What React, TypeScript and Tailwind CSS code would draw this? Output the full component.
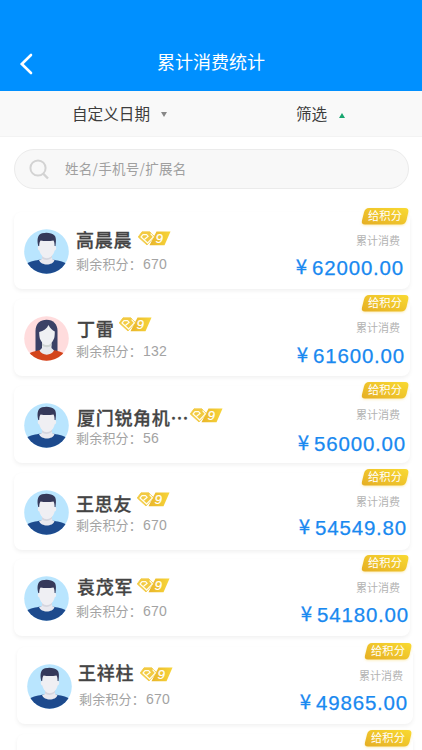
interface Member {
  name: string;
  points: number;
  total: string;
  female?: boolean;
  cardClass: string;
  nameClass: string;
  levelClass: string;
  totalClass: string;
}

const members: Member[] = [
  { name: "高晨晨", points: 670, total: "62000.00", cardClass: "ml-3.5 mt-[23px]", nameClass: "pt-[14px]", levelClass: "mt-px ml-[5px]", totalClass: "pt-[7px] pr-[6px]" },
  { name: "丁雷", points: 132, total: "61600.00", female: true, cardClass: "ml-3.5 mt-2.5", nameClass: "pt-4 pl-px", levelClass: "-mt-0.5 ml-[4px]", totalClass: "pt-2 pr-[5px]" },
  { name: "厦门锐角机⋯", points: 56, total: "56000.00", cardClass: "ml-3.5 mt-2.5", nameClass: "pt-[18px] pl-px", levelClass: "ml-0", totalClass: "pt-[9px] pr-[4px]" },
  { name: "王思友", points: 670, total: "54549.80", cardClass: "ml-3.5 mt-2.5", nameClass: "pt-[17px]", levelClass: "-mt-0.5 ml-[4px]", totalClass: "pt-1.5 pr-[3px]" },
  { name: "袁茂军", points: 670, total: "54180.00", cardClass: "ml-3.5 mt-[9px]", nameClass: "pt-[14px] pl-px", levelClass: "mt-px ml-[3px]", totalClass: "pt-[7px] pr-px" },
  { name: "王祥柱", points: 670, total: "49865.00", cardClass: "ml-[17px] mt-[11px]", nameClass: "pt-[12px] -ml-px", levelClass: "mt-1 ml-[5px]", totalClass: "pt-[7px] pr-[5px]" },
];

function MaleAvatar() {
  return (
    <svg viewBox="0 0 45 45" className="size-[45px]">
      <defs>
        <clipPath id="male-clip"><circle cx="22.5" cy="22.5" r="22.3" /></clipPath>
      </defs>
      <g clipPath="url(#male-clip)">
        <rect width="45" height="45" fill="#b9e5fe" />
        <path d="M2 35C6 32 12 31.5 17 30.5H28C33 31.5 39 32 43 35V45H2Z" fill="#1d4a8d" />
        <path d="M18 24H28V30L30.5 31C29 37 17 37 15 31L18 30Z" fill="#e9e9ef" />
        <path d="M18 27C21 30 25 30 28 26V28.5C25 32 20 31 18 29.5Z" fill="#d5d6df" />
        <path d="M15.2 10H30.8V17C33 17 32.4 21.5 30.6 21.5C30 25.5 26.5 29 23 29S16 25.5 15.4 21.5C13.6 21.5 13 17 15.2 17Z" fill="#efeff3" />
        <path d="M14.3 17C13 12 13 5.5 18 4.3C22 3 28 3.5 30.5 6.5C32.5 8.5 32 13 31.5 17H30.6C30.6 14.5 30.3 12.5 29.5 11.4C25 12.2 20 12 16.6 11.4C15.6 12.5 15.3 14.5 15.2 17Z" fill="#35395a" />
      </g>
    </svg>
  );
}

function FemaleAvatar() {
  return (
    <svg viewBox="0 0 45 45" className="size-[45px]">
      <defs>
        <clipPath id="female-clip"><circle cx="22.5" cy="22.5" r="22.3" /></clipPath>
      </defs>
      <g clipPath="url(#female-clip)">
        <rect width="45" height="45" fill="#ffdcdd" />
        <path d="M11.5 36V15C11.5 7.5 16.5 3.8 22.5 3.8C29.5 3.8 33.5 8.5 33.5 15V36Z" fill="#3b4166" />
        <path d="M3 39C7 35.5 13 34.5 17 34H28C33 34.5 38 35.5 42 39V45H3Z" fill="#d3441b" />
        <path d="M18 25H27.5V32L30 34.5C27.5 40 18 40 15.5 34.5L18 32Z" fill="#e8e9ed" />
        <path d="M18 27C21 30 25 29.5 27.5 27V29.5C25 32 20.5 31.5 18 29.5Z" fill="#cfd4d3" />
        <path d="M24.5 9C26 12 28.5 14.5 30.8 15.5C30.8 19 30.5 22 29.8 23C28 27 25.5 29 23 29S18 27 16 23C15.4 21 15.2 18 15.2 16C19.5 15 23 12.5 24.5 9Z" fill="#eff0f3" />
      </g>
    </svg>
  );
}

function LevelIcon() {
  return (
    <svg viewBox="0 0 34 16" className="w-[34px] h-4 shrink-0">
      <defs>
        <linearGradient id="level-gold">
          <stop offset="0" stopColor="#e9b52a" />
          <stop offset="1" stopColor="#f7d53a" />
        </linearGradient>
      </defs>
      <path d="M19.5 0.5H33.5L27.5 14.2H12.5Z" fill="url(#level-gold)" />
      <path d="M5 0.8H12.8L17.6 5.6L10 14L1.2 6Z" fill="#f2ca42" stroke="#f2ca42" strokeWidth="0.8" strokeLinejoin="round" />
      <path d="M7.6 8.3L11.2 5.3L9.6 3.6H6L4 6L10.6 12L16.4 5.8L13.6 2.6" fill="none" stroke="#fffdf0" strokeWidth="1.2" strokeLinejoin="round" />
      <text x="18.6" y="12.2" fill="white" fontSize="13.5" fontStyle="italic" fontFamily="Liberation Sans, sans-serif" stroke="white" strokeWidth="0.2">9</text>
    </svg>
  );
}

function PointsButton() {
  return (
    <button className="absolute -top-1 right-[1px] w-[48px] h-[17px] text-white text-[11.3px] leading-[15px]">
      <svg viewBox="0 0 48 17" className="absolute inset-0 size-full drop-shadow-[0_1px_1px_#f7dc7580]">
        <defs>
          <linearGradient id="button-gold" x1="0" y1="1" x2="1" y2="0">
            <stop offset="0" stopColor="#e5ae24" />
            <stop offset="1" stopColor="#f9da32" />
          </linearGradient>
        </defs>
        <path d="M8 0H44Q48 0 47.3 4L45.5 12Q44.3 16.5 40 16.5H4Q0 16.5 1 12.5L3 4.5Q4 0 8 0Z" fill="url(#button-gold)" />
      </svg>
      <span className="relative -top-px">给积分</span>
    </button>
  );
}

function MemberCard({ member }: { member: Member }) {
  return (
    <div className={`relative flex w-[396px] h-[77px] shrink-0 rounded-lg bg-white shadow-[0_2px_4px_rgba(0,0,0,0.06)] ${member.cardClass}`}>
      <div className="ml-[9.5px] mt-[16.5px] shrink-0">
        {member.female ? <FemaleAvatar /> : <MaleAvatar />}
      </div>
      <div className="ml-[7.5px] flex-1 whitespace-nowrap">
        <div className={`h-[42px] flex items-start ${member.nameClass}`}>
          <span className="text-[18px] leading-[26px] tracking-[0.7px] font-medium text-[#444] [-webkit-text-stroke:0.3px_#444]">{member.name}</span>
          <span className={`pt-1 ${member.levelClass}`}>
            <LevelIcon />
          </span>
        </div>
        <p className="h-5 text-[13px] leading-5 text-[#a3a3a3] tracking-[0.2px]">
          剩余积分：<span className="ml-px text-[14px] font-['Liberation_Sans',sans-serif]">{member.points}</span>
        </p>
      </div>
      <div className="w-[130px] shrink-0 whitespace-nowrap">
        <p className="pt-5 pr-2.5 text-right text-[11px] leading-4 text-[#b3b3b3]">累计消费</p>
        <p className={`flex justify-end text-[20.5px] leading-[26px] text-[#1989f0] [-webkit-text-stroke:0.25px_#1989f0] ${member.totalClass}`}>
          <span className="-mt-[3px] mr-[5px]">¥</span>
          <span className="tracking-[0.8px] font-['Liberation_Sans',sans-serif]">{member.total}</span>
        </p>
      </div>
      <PointsButton />
    </div>
  );
}

export default function App() {
  return (
    <div className="w-[422px] h-[750px] overflow-hidden bg-white flex flex-col font-['Noto_Sans_CJK_SC',sans-serif]">
      {/* Header */}
      <header className="h-[91px] shrink-0 bg-[#0090ff] flex items-end pb-[14px] text-white">
        <svg viewBox="0 0 14 22" className="w-3.5 h-[22px] ml-[19px] mb-0.5" fill="none" stroke="currentColor" strokeWidth="2.6" strokeLinecap="round">
          <path d="M12 2L2.8 11L12 20" />
        </svg>
        <h1 className="ml-[124px] mb-[3px] text-[18px] leading-[26px]">累计消费统计</h1>
      </header>

      {/* Filters */}
      <div className="h-[46px] shrink-0 bg-[#f9f9f9] border-b border-[#f3f3f3] flex text-[#3d3d3d] text-[15.6px]">
        <button className="ml-[72px] flex items-center">
          自定义日期
          <svg viewBox="0 0 6 5" className="ml-[11px] mt-0.5 w-1.5 h-[5px]"><path d="M0 0H6L3 5Z" fill="#888" /></svg>
        </button>
        <button className="ml-[129px] mt-px flex items-center">
          筛选
          <svg viewBox="0 0 6 5" className="ml-[12px] mt-0.5 w-1.5 h-[5px]"><path d="M0 5H6L3 0Z" fill="#18a66f" /></svg>
        </button>
      </div>

      {/* Search */}
      <div className="mt-3 ml-3.5 w-[395px] h-10 shrink-0 rounded-full bg-[#f8f8f8] border border-[#ebebeb] flex items-center">
        <svg viewBox="0 0 20 21" className="ml-3.5 w-5 h-[21px]" fill="none" stroke="#d3d3d3" strokeWidth="2">
          <circle cx="9" cy="9" r="7.6" />
          <path d="M14 14.5L19 19.5" strokeWidth="2.4" />
        </svg>
        <span className="ml-4 mb-0.5 text-[13.5px] tracking-[0.3px] text-[#a0a0a0]">姓名/手机号/扩展名</span>
      </div>

      {/* Members */}
      {members.map((member) => (
        <MemberCard key={member.name} member={member} />
      ))}
      <div className="relative ml-[17px] mt-2.5 w-[396px] h-[77px] shrink-0 rounded-lg bg-white shadow-[0_2px_4px_rgba(0,0,0,0.06)]">
        <PointsButton />
      </div>
    </div>
  );
}
